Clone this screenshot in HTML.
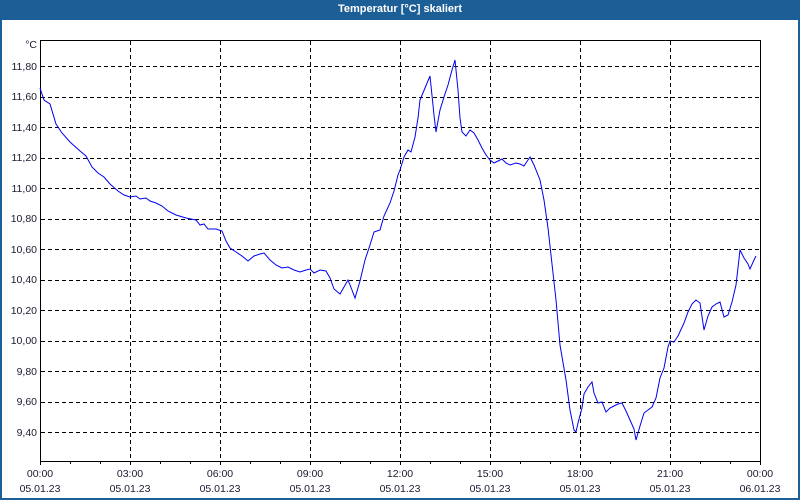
<!DOCTYPE html>
<html><head><meta charset="utf-8"><style>
html,body{margin:0;padding:0;background:#fff;}
#w{position:relative;width:800px;height:500px;overflow:hidden;background:#fff;}
#t{position:absolute;left:0;top:0;width:800px;height:20px;background:#1c5e96;color:#fff;font:bold 11px "Liberation Sans",sans-serif;text-align:center;line-height:19px;}
#b{position:absolute;left:0;top:20px;width:796px;height:478px;border:2px solid #1c5e96;border-top:none;}
svg{position:absolute;left:0;top:0;}
text{font-family:"Liberation Sans",sans-serif;font-size:10.5px;fill:#1a1a30;}
</style></head><body><div id="w">
<div id="t">Temperatur [°C] skaliert</div>
<div id="b"></div>
<svg width="800" height="500" viewBox="0 0 800 500">
<g stroke="#000" stroke-width="1" stroke-dasharray="4,3" fill="none">
<path d="M130.5 41V461M220.5 41V461M310.5 41V461M400.5 41V461M490.5 41V461M580.5 41V461M670.5 41V461"/>
<path d="M41 66.5H760M41 97.5H760M41 127.5H760M41 158.5H760M41 188.5H760M41 219.5H760M41 249.5H760M41 280.5H760M41 310.5H760M41 341.5H760M41 371.5H760M41 402.5H760M41 432.5H760"/>
</g>
<rect x="40.5" y="40.5" width="720" height="421" fill="none" stroke="#000"/>
<g stroke="#000"><path d="M40.5 461v4M70.5 461v3M100.5 461v3M130.5 461v4M160.5 461v3M190.5 461v3M220.5 461v4M250.5 461v3M280.5 461v3M310.5 461v4M340.5 461v3M370.5 461v3M400.5 461v4M430.5 461v3M460.5 461v3M490.5 461v4M520.5 461v3M550.5 461v3M580.5 461v4M610.5 461v3M640.5 461v3M670.5 461v4M700.5 461v3M730.5 461v3M760.5 461v4"/></g>
<g text-anchor="end">
<text x="37" y="48">°C</text>
<text x="37" y="70">11,80</text><text x="37" y="100">11,60</text><text x="37" y="131">11,40</text><text x="37" y="161">11,20</text><text x="37" y="192">11,00</text><text x="37" y="222">10,80</text><text x="37" y="253">10,60</text><text x="37" y="283">10,40</text><text x="37" y="314">10,20</text><text x="37" y="344">10,00</text><text x="37" y="375">9,80</text><text x="37" y="405">9,60</text><text x="37" y="436">9,40</text>
</g>
<g text-anchor="middle">
<text x="40" y="477">00:00</text><text x="40" y="492">05.01.23</text>
<text x="130" y="477">03:00</text><text x="130" y="492">05.01.23</text>
<text x="220" y="477">06:00</text><text x="220" y="492">05.01.23</text>
<text x="310" y="477">09:00</text><text x="310" y="492">05.01.23</text>
<text x="400" y="477">12:00</text><text x="400" y="492">05.01.23</text>
<text x="490" y="477">15:00</text><text x="490" y="492">05.01.23</text>
<text x="580" y="477">18:00</text><text x="580" y="492">05.01.23</text>
<text x="670" y="477">21:00</text><text x="670" y="492">05.01.23</text>
<text x="760" y="477">00:00</text><text x="760" y="492">06.01.23</text>
</g>
<polyline fill="none" stroke="#0000ee" stroke-width="1" points="40,88 44,100 50,104 56,124 62,133 70,142 80,151 86,156 92,167 98,173 104,177 110,184 118,191 124,195 130,197 136,196 140,199 146,198 150,201 156,203 162,206 168,211 176,215 186,218 196,220 200,225 204,224 208,229 216,229 222,231 226,241 230,248 236,252 242,256 248,261 254,256 260,254 264,253 270,260 276,265 282,268 288,267 294,270 300,272 306,270 310,269 314,273 320,270 326,271 330,278 334,289 340,294 344,287 348,280 352,290 355,298 360,281 365,260 370,245 374,232 380,230 384,216 390,203 394,191 398,175 400,170 404,157 408,150 411,152 415,137 418,118 420,100 425,88 430,76 434,115 436,132 440,110 444,97 448,85 452,70 455,60 458,90 460,118 462,132 466,136 470,130 474,133 478,140 482,148 486,155 490,160 494,163 498,161 502,159 506,163 510,165 516,163 520,164 524,166 530,157 534,165 540,180 544,200 548,228 552,264 556,300 560,345 566,380 570,410 574,430 576,432 578,423 582,408 584,394 588,387 592,382 594,393 598,403 602,402 606,412 610,408 614,406 618,404 622,403 626,411 630,420 634,429 636,440 640,426 644,413 648,410 652,407 656,398 660,378 664,368 668,347 670,341 674,342 678,336 684,323 688,312 692,304 696,300 700,303 704,330 708,316 712,307 716,304 720,302 724,317 728,315 732,302 736,285 740,250 744,258 748,264 750,269 754,260 756,256"/>
</svg>
</div></body></html>
